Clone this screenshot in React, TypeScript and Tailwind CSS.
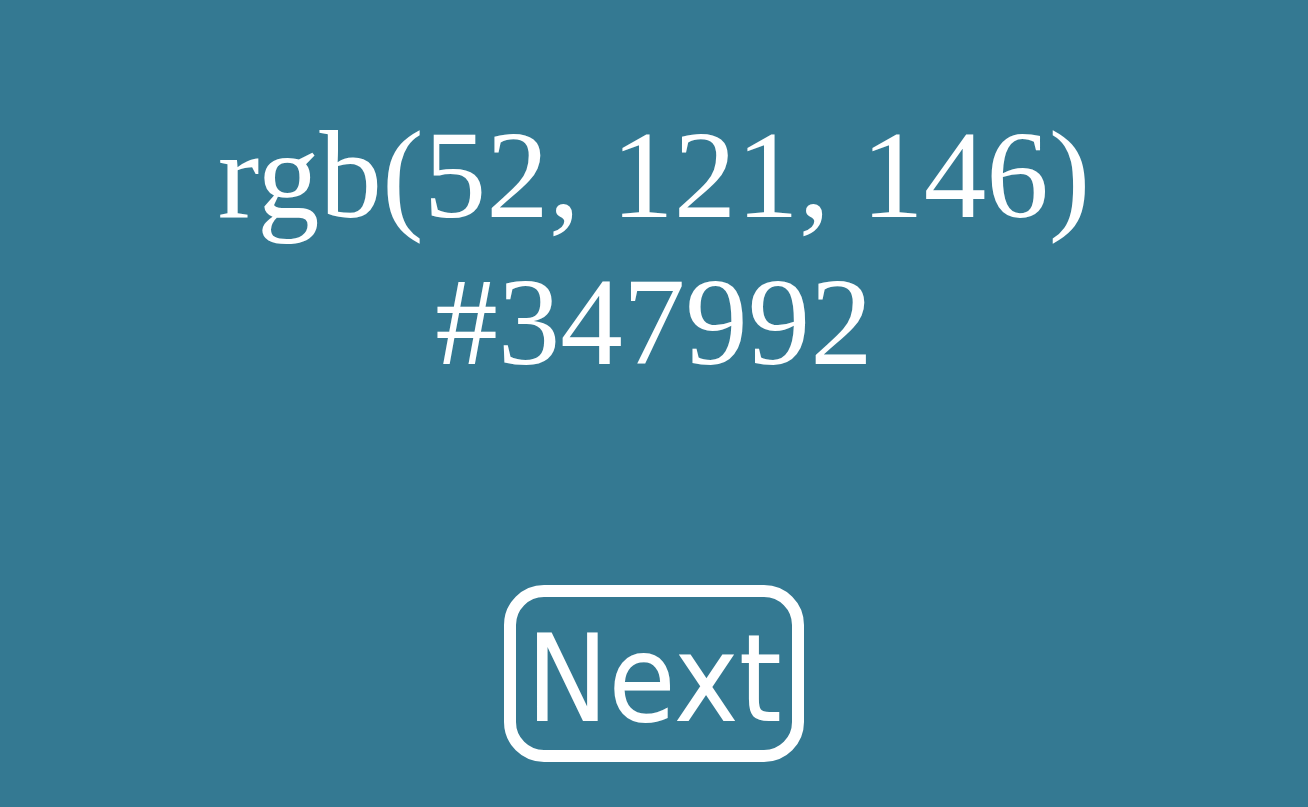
export default function App() {
  return (
    <div className="flex h-screen w-full flex-col items-center bg-[#347992] text-white">
      <div className="pt-[102px] text-center font-['Liberation_Serif',serif] text-[125px] leading-[147px]">
        <div>rgb(52, 121, 146)</div>
        <div>#347992</div>
      </div>
      <button className="mt-[189px] rounded-[40px] border-[12px] border-white px-[10px] pt-[12px] font-['DejaVu_Sans_Condensed','DejaVu_Sans',sans-serif] text-[122px] leading-[141px] text-white">
        Next
      </button>
    </div>
  )
}
